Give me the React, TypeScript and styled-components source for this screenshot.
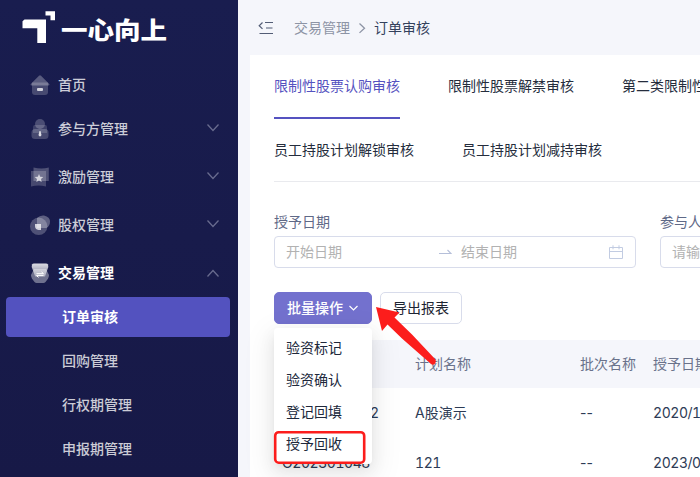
import { ReactNode } from "react";
import styled, { createGlobalStyle } from "styled-components";

const GlobalStyle = createGlobalStyle`
  * {
    box-sizing: border-box;
  }
  body {
    margin: 0;
    overflow: hidden;
    background: #f5f6fb;
    color: #1d2540;
    font-family: Inter, "Noto Sans CJK SC", sans-serif;
    font-size: 14px;
    line-height: 20px;
  }
`;

const Container = styled.div`
  display: flex;
  width: 700px;
  height: 477px;
  overflow: hidden;
  position: relative;
`;

const Sidebar = styled.aside`
  flex: 0 0 238px;
  background: linear-gradient(#191d4f, #171947);
`;
const Logo = styled.div`
  display: flex;
  height: 65px;
  padding: 11px 0 0 22px;
  color: #fff;
`;
const LogoText = styled.span`
  margin: 5px 0 0 6px;
  font-size: 26px;
  font-weight: 900;
  line-height: 28px;
  transform: scale(1.02, 0.9);
  transform-origin: left;
  white-space: nowrap;
`;
const MenuItem = styled.div<{ $open?: boolean; $gap?: number }>`
  display: flex;
  align-items: center;
  height: 40px;
  margin-bottom: ${(p) => p.$gap ?? 8}px;
  padding: 0 18px 0 30px;
  color: ${(p) => (p.$open ? "#fff" : "rgba(255, 255, 255, 0.78)")};
  font-weight: ${(p) => (p.$open ? 700 : 500)};

  span {
    flex: 1;
    margin-left: 8px;
  }
`;
const SubItem = styled.div<{ $active?: boolean }>`
  height: 40px;
  margin: 0 8px 4px 6px;
  padding-left: 56px;
  border-radius: 4px;
  background: ${(p) => (p.$active ? "#5352bf" : "transparent")};
  color: ${(p) => (p.$active ? "#fff" : "rgba(255, 255, 255, 0.78)")};
  font-weight: ${(p) => (p.$active ? 700 : 500)};
  line-height: 40px;
`;

const Main = styled.main`
  flex: 1;
  min-width: 0;
  padding-left: 12px;
`;
const Header = styled.header`
  display: flex;
  align-items: center;
  height: 55px;
  padding-left: 8px;
  color: #33415c;

  svg:first-child {
    margin-right: 20px;
  }
`;
const Parent = styled.span`
  margin-right: 8px;
  color: #8d94a5;
`;
const Current = styled.span`
  margin-left: 8px;
`;
const Card = styled.section`
  height: 422px;
  padding-left: 24px;
  background: #fff;
  white-space: nowrap;
`;
const Tabs = styled.nav`
  height: 127px;
  border-bottom: 1px solid #e9eaee;
`;
const TabRow = styled.div`
  display: flex;
  gap: 48px;
  height: 64px;
`;
const Tab = styled.div<{ $active?: boolean }>`
  flex: none;
  height: 64px;
  border-bottom: 2px solid ${(p) => (p.$active ? "#5552c0" : "transparent")};
  color: ${(p) => (p.$active ? "#5552c0" : "#252d3d")};
  line-height: 62px;
`;
const Filters = styled.div`
  display: flex;
  gap: 24px;
  padding-top: 30px;
`;
const Field = styled.div<{ $width: number }>`
  flex: 0 0 ${(p) => p.$width}px;
  color: #5f6987;
`;
const Input = styled.div`
  display: flex;
  align-items: center;
  height: 32px;
  margin-top: 4px;
  padding: 0 12px 0 11px;
  border: 1px solid #d8dceb;
  border-radius: 4px;
  color: #b2b2b2;

  span:first-child {
    width: 153px;
  }
  span:nth-of-type(2) {
    flex: 1;
    margin-left: 9px;
  }
`;
const Actions = styled.div`
  display: flex;
  gap: 8px;
  margin-top: 24px;
`;
const Dropdown = styled.div`
  position: relative;
`;
const Button = styled.button<{ $primary?: boolean }>`
  display: flex;
  align-items: center;
  gap: 5px;
  width: ${(p) => (p.$primary ? 98 : 82)}px;
  height: 32px;
  padding: 0 12px;
  border: 1px solid ${(p) => (p.$primary ? "#7371ce" : "#d8dceb")};
  border-radius: 5px;
  background: ${(p) => (p.$primary ? "#7371ce" : "#fff")};
  color: ${(p) => (p.$primary ? "#fff" : "#1d2533")};
  font: inherit;
  font-weight: ${(p) => (p.$primary ? 500 : 400)};
`;
const Menu = styled.div`
  position: absolute;
  z-index: 1;
  top: 36px;
  left: 0;
  width: 98px;
  padding: 4px 0;
  border-radius: 4px;
  background: #fff;
  box-shadow: 0 3px 6px -4px rgba(0, 0, 0, 0.12),
    0 6px 16px rgba(0, 0, 0, 0.08), 0 9px 28px 8px rgba(0, 0, 0, 0.05);
`;
const Option = styled.div`
  padding: 6px 12px;
  color: #20283b;
`;
const Table = styled.div`
  margin-top: 16px;
`;
const Row = styled.div<{ $head?: boolean }>`
  display: grid;
  grid-template-columns: 133px 165px 73px 1fr;
  align-items: center;
  height: ${(p) => (p.$head ? 48 : 50)}px;
  background: ${(p) => (p.$head ? "#f5f6fb" : "#fff")};
  color: ${(p) => (p.$head ? "#6a728b" : "#2d3b55")};
`;
const Cell = styled.span<{ $numeric?: boolean }>`
  padding-left: 8px;
  font-variant-numeric: ${(p) => (p.$numeric ? "tabular-nums" : "normal")};
  letter-spacing: ${(p) => (p.$numeric ? "-0.45px" : "normal")};
`;
const Markup = styled.svg`
  position: absolute;
  z-index: 2;
  inset: 0;
`;

const Chevron = ({ up }: { up?: boolean }) => (
  <svg width="14" height="12" viewBox="0 0 14 12" fill="none" stroke="#686b8e" strokeWidth="1.3">
    <path d={up ? "M1.5 9.5 7 3.5l5.5 6" : "M1.5 1.5 7 7.5l5.5-6"} />
  </svg>
);

const Icon = ({ children }: { children: ReactNode }) => (
  <svg width="20" height="20" viewBox="0 0 20 20" fill="#fff">
    {children}
  </svg>
);

const HomeIcon = () => (
  <Icon>
    <path d="M9 .8q1-1 2 0l8 8q1.2 1.7-.8 1.7H1.8Q-.2 10.500 1 8.800Z" opacity=".28" />
    <path d="M2 7.500h16V17q0 3-3 3H5q-3 0-3-3Z" opacity=".2" />
    <rect x="7" y="13" width="6" height="3" rx="1" opacity=".75" />
  </Icon>
);
const UserIcon = () => (
  <Icon>
    <circle cx="10" cy="5" r="5" opacity=".22" />
    <path d="M4.500 6h11Q17 6 17 9v5H3V9q0-3 1.500-3Z" opacity=".16" />
    <rect x="1.500" y="10" width="17" height="10" rx="3.500" opacity=".2" />
    <path d="M9.500 12h1l1 4-.7 1.200H9.200L8.500 16Z" opacity=".8" />
  </Icon>
);
const BadgeIcon = () => (
  <Icon>
    <path d="M3.500.5q8 1.800 15.300 0V14H3.500Z" opacity=".24" />
    <path d="M1 4h15v15.500q-7.500-2-15 0Z" opacity=".2" />
    <path d="m9 7 1.200 2.800 3.100.2-2.300 2 .7 3L9 13.500 6.300 15l.7-3-2.300-2 3.100-.2Z" opacity=".7" />
  </Icon>
);
const EquityIcon = () => (
  <Icon>
    <path d="M7 3q3-3 7-2.500 6 1.500 6 6 0 4-3.500 6.500H7Z" opacity=".3" />
    <circle cx="8.700" cy="11.300" r="8.700" opacity=".24" />
    <path d="M5 9h6v6H8.500Q5 14.500 5 11Z" opacity=".75" />
  </Icon>
);
const TradeIcon = () => (
  <Icon>
    <linearGradient id="cup" x2="0" y2="1">
      <stop stopColor="#fff" stopOpacity=".85" />
      <stop offset="1" stopColor="#fff" stopOpacity=".45" />
    </linearGradient>
    <path d="M2 1.500Q2.500.5 4 .5h12q1.500 0 2 1l.3 2.500-3.300 9.500H5.200L1.700 4Z" fill="url(#cup)" />
    <path d="M4 6h12l3 6q0 3-3.500 7-1 1-2 1h-7q-1 0-2-1Q1 15 1 12Z" opacity=".38" />
    <path d="M6.500 10.700h7l-2-1.800M13.500 12.600h-7l2 1.800" fill="none" stroke="#fff" strokeWidth="1" />
  </Icon>
);

const groups = [
  { name: "首页", icon: <HomeIcon />, leaf: true },
  { name: "参与方管理", icon: <UserIcon /> },
  { name: "激励管理", icon: <BadgeIcon /> },
  { name: "股权管理", icon: <EquityIcon /> },
  { name: "交易管理", icon: <TradeIcon />, open: true },
];
const subItems = ["订单审核", "回购管理", "行权期管理", "申报期管理"];
const options = ["验资标记", "验资确认", "登记回填", "授予回收"];
const rows = [
  ["O2023010512", "A股演示", "--", "2020/10/14"],
  ["O202301048", "121", "--", "2023/01/05"],
];

function App() {
  return (
    <Container>
      <GlobalStyle />
      <Sidebar>
        <Logo>
          <svg width="33" height="33" viewBox="0 0 33 33" fill="#fff">
            <path d="M2.500 8.500H24V32h-8.700V17.300H.5v-7Z" />
            <path d="M23.500.3H33v9h-4.500V4.500h-5Z" />
          </svg>
          <LogoText>一心向上</LogoText>
        </Logo>
        {groups.map((g) => (
          <MenuItem key={g.name} $open={g.open} $gap={g.leaf || g.open ? 4 : 8}>
            {g.icon}
            <span>{g.name}</span>
            {!g.leaf && <Chevron up={g.open} />}
          </MenuItem>
        ))}
        {subItems.map((name, i) => (
          <SubItem key={name} $active={i === 0}>
            {name}
          </SubItem>
        ))}
      </Sidebar>
      <Main>
        <Header>
          <svg width="16" height="14" viewBox="0 0 16 14" fill="none" stroke="#535d76" strokeWidth="1.200">
            <path d="M7 1.500h8M8 7h6.500M1.500 12.500H15M4.500 1.500 1.200 4.700l3.300 3.200" />
          </svg>
          <Parent>交易管理</Parent>
          <svg width="8" height="12" viewBox="0 0 8 12" fill="none" stroke="#8d94a5" strokeWidth="1.300">
            <path d="m1.500 1.500 5 4.700-5 4.700" />
          </svg>
          <Current>订单审核</Current>
        </Header>
        <Card>
          <Tabs>
            <TabRow>
              <Tab $active>限制性股票认购审核</Tab>
              <Tab>限制性股票解禁审核</Tab>
              <Tab>第二类限制性股票归属审核</Tab>
            </TabRow>
            <TabRow>
              <Tab>员工持股计划解锁审核</Tab>
              <Tab>员工持股计划减持审核</Tab>
            </TabRow>
          </Tabs>
          <Filters>
            <Field $width={362}>
              授予日期
              <Input>
                <span>开始日期</span>
                <svg width="13" height="8" viewBox="0 0 13 8" fill="none" stroke="#b5bfd9" strokeWidth="1.100">
                  <path d="M0 5.500h12L8.500 2" />
                </svg>
                <span>结束日期</span>
                <svg width="14" height="14" viewBox="0 0 14 14" fill="none" stroke="#c2cce2">
                  <path d="M.5 2.500h13v11H.5ZM.5 6.500h13M4 .3v4M10 .3v4" />
                </svg>
              </Input>
            </Field>
            <Field $width={362}>
              参与人姓名
              <Input>
                <span>请输入</span>
              </Input>
            </Field>
          </Filters>
          <Actions>
            <Dropdown>
              <Button $primary>
                批量操作
                <svg width="11" height="10" viewBox="0 0 11 10" fill="none" stroke="#fff" strokeWidth="1.200">
                  <path d="m1.500 3 4 4 4-4" />
                </svg>
              </Button>
              <Menu>
                {options.map((name) => (
                  <Option key={name}>{name}</Option>
                ))}
              </Menu>
            </Dropdown>
            <Button>导出报表</Button>
          </Actions>
          <Table>
            <Row $head>
              <Cell>订单编号</Cell>
              <Cell>计划名称</Cell>
              <Cell>批次名称</Cell>
              <Cell>授予日期</Cell>
            </Row>
            {rows.map((cells) => (
              <Row key={cells[0]}>
                {cells.map((cell, i) => (
                  <Cell key={i} $numeric={/\d/.test(cell)}>
                    {cell}
                  </Cell>
                ))}
              </Row>
            ))}
          </Table>
        </Card>
      </Main>
      <Markup width="700" height="477">
        <rect x="275.200" y="432.200" width="89" height="30.500" rx="3.500" fill="none" stroke="#fc1d1c" strokeWidth="2.600" />
        <path
          d="M376 307 399.500 312.500 394.500 317.500 412 334.500 435.500 359.500Q436.500 362.500 434 364.500 432.500 365 431 364L402 338.500 387.500 324.500 382 331Z"
          fill="#fc1d1c"
        />
      </Markup>
    </Container>
  );
}

export default App;
